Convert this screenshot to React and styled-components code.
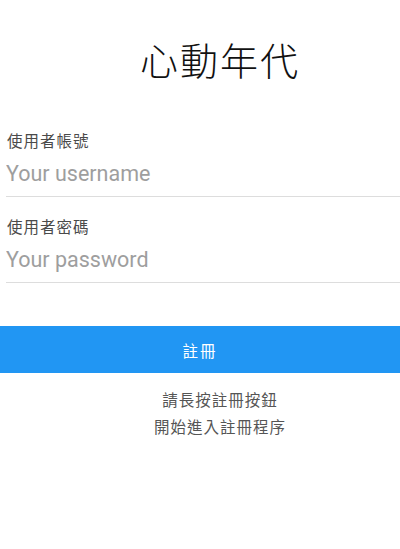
import React from 'react'
import styled, { createGlobalStyle } from 'styled-components'

const GlobalStyle = createGlobalStyle`
  html, body {
    margin: 0;
    padding: 0;
    background: #fff;
  }
  body {
    font-family: Roboto, "Noto Sans CJK TC", sans-serif;
  }
`

const Page = styled.div`
  width: 400px;
  min-height: 549px;
  display: flex;
  flex-direction: column;
`

const Title = styled.h1`
  margin: 0;
  padding: 35px 0 0 40px;
  height: 95px;
  box-sizing: border-box;
  text-align: center;
  font-family: "Noto Sans CJK TC", sans-serif;
  font-weight: 300;
  font-size: 38px;
  letter-spacing: 2px;
  color: #111;
  line-height: 48px;
`

const Form = styled.div`
  display: flex;
  flex-direction: column;
  padding-left: 6px;
  padding-top: 34px;
  gap: 18px;
`

const Field = styled.div`
  display: flex;
  flex-direction: column;
  border-bottom: 1.5px solid #ddd;
`

const Label = styled.span`
  font-family: "Noto Sans CJK TC", sans-serif;
  font-size: 15.5px;
  letter-spacing: 1px;
  color: #4a4a4a;
  line-height: 22px;
  padding-left: 1px;
`

const Input = styled.input`
  border: none;
  outline: none;
  padding: 0;
  margin: 0;
  height: 45px;
  font-family: Roboto, sans-serif;
  font-size: 21.5px;
  color: #333;
  background: transparent;
  &::placeholder {
    color: #9e9e9e;
  }
`

const Button = styled.button`
  margin-top: 43px;
  width: 100%;
  height: 47px;
  border: none;
  background: #2196f3;
  color: #fff;
  font-family: "Noto Sans CJK TC", sans-serif;
  font-size: 15.5px;
  letter-spacing: 2px;
`

const Hint = styled.p`
  margin: 13px 0 0 40px;
  text-align: center;
  font-family: "Noto Sans CJK TC", sans-serif;
  font-size: 15.5px;
  letter-spacing: 1px;
  line-height: 27px;
  color: #555;
`

export default function App() {
  return (
    <Page>
      <GlobalStyle />
      <Title>心動年代</Title>
      <Form>
        <Field>
          <Label>使用者帳號</Label>
          <Input placeholder="Your username" />
        </Field>
        <Field>
          <Label>使用者密碼</Label>
          <Input type="password" placeholder="Your password" />
        </Field>
      </Form>
      <Button>註冊</Button>
      <Hint>
        請長按註冊按鈕
        <br />
        開始進入註冊程序
      </Hint>
    </Page>
  )
}
